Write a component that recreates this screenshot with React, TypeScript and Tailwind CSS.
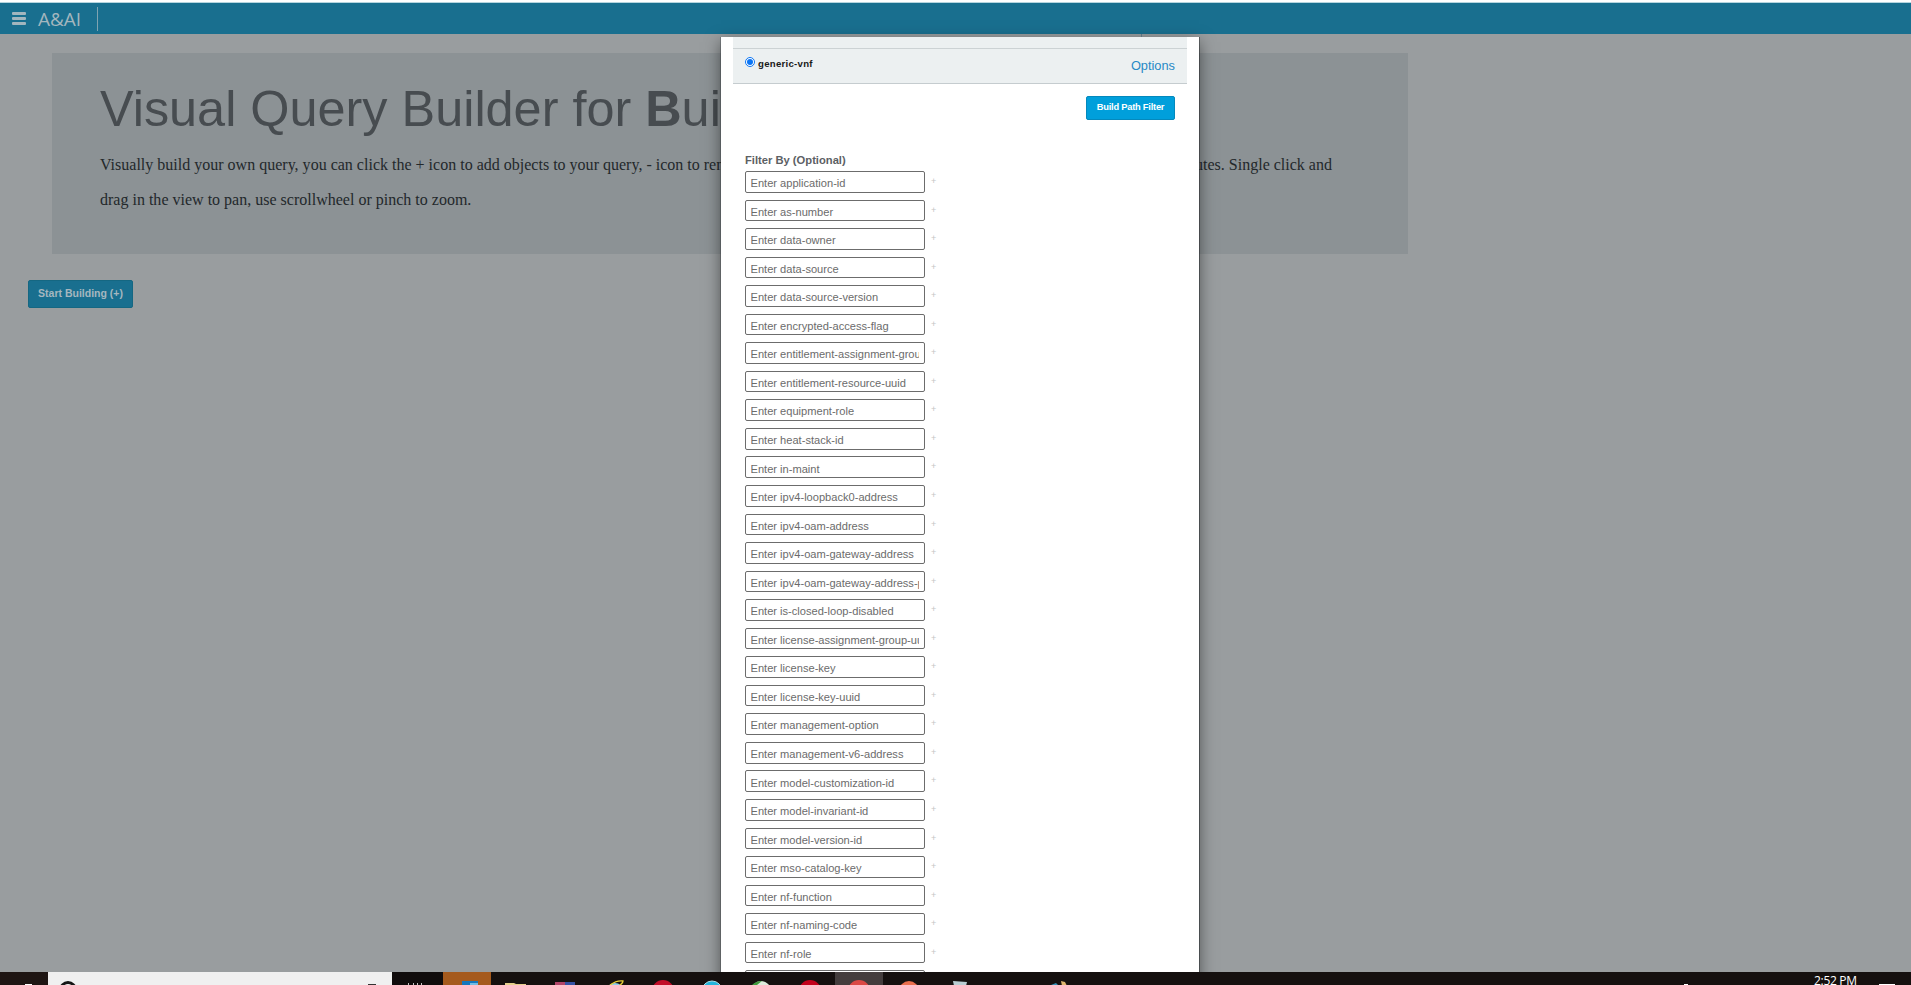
const fields = [
  "application-id", "as-number", "data-owner", "data-source", "data-source-version",
  "encrypted-access-flag", "entitlement-assignment-group-uuid", "entitlement-resource-uuid",
  "equipment-role", "heat-stack-id", "in-maint", "ipv4-loopback0-address", "ipv4-oam-address",
  "ipv4-oam-gateway-address", "ipv4-oam-gateway-address-prefix-length", "is-closed-loop-disabled",
  "license-assignment-group-uuid", "license-key", "license-key-uuid", "management-option",
  "management-v6-address", "model-customization-id", "model-invariant-id", "model-version-id",
  "mso-catalog-key", "nf-function", "nf-naming-code", "nf-role",
];

function Header() {
  return (
    <header className="flex h-[31px] shrink-0 items-center bg-[#196f8f] text-[#a3b6be]">
      <div className="ml-3 flex w-[14px] flex-col gap-[2px]">
        <span className="h-[3px] rounded-[1px] bg-[#a3b6be]" />
        <span className="h-[3px] rounded-[1px] bg-[#a3b6be]" />
        <span className="h-[3px] rounded-[1px] bg-[#a3b6be]" />
      </div>
      <span className="ml-3 w-[59px] pt-[2px] font-['Open_Sans',sans-serif] text-[19px] leading-none">A&amp;AI</span>
      <span className="mt-px h-6 w-px bg-[#7fa3b1]" />
    </header>
  );
}

function Intro() {
  return (
    <section className="ml-[52px] mt-[19px] h-[201px] w-[1356px] bg-[#8c9295] pl-12 pt-[28px]">
      <h1 className="h-[66px] whitespace-nowrap text-[50.4px] leading-[56px] text-[#474c50]">
        Visual Query Builder for <b>B</b>uild
      </h1>
      <div className="w-[1232px] font-['Liberation_Serif',serif] text-[16.03px] leading-[35px] text-[#23282b]">
        <p className="flex justify-between whitespace-nowrap">
          <span>Visually build your own query, you can click the + icon to add objects to your query, - icon to remove</span>
          <span>attributes. Single click and</span>
        </p>
        <p>drag in the view to pan, use scrollwheel or pinch to zoom.</p>
      </div>
    </section>
  );
}

function FilterModal() {
  return (
    <div className="absolute left-[721px] top-[37px] h-[1000px] w-[478px] bg-white px-3 shadow-[0_5px_15px_rgba(0,0,0,0.5),1px_0_0_rgba(60,65,68,0.6),-1px_0_0_rgba(60,65,68,0.3)]">
      <div className="relative h-3 border-b border-[#ccd2d4] bg-[#ecf0f1]">
        <span className="absolute right-[45px] top-[-3px] h-[3px] w-px bg-[#5f7480]" />
      </div>
      <div className="flex h-[35px] justify-between border-b border-[#c5cccf] bg-[#ecf0f1] px-3">
        <label className="flex items-start gap-[3px] text-[9.6px] font-bold leading-[14px] tracking-[0.28px] text-[#191919]">
          <span className="mt-2 flex size-[10px] items-center justify-center rounded-full border border-[#0b75f5] bg-white">
            <span className="size-[6px] rounded-full bg-[#0b75f5]" />
          </span>
          <span className="mt-2">generic-vnf</span>
        </label>
        <a className="mt-[9px] text-[12.8px] leading-4 text-[#2789c6]">Options</a>
      </div>
      <div className="flex justify-end px-3 pt-3">
        <button className="h-6 w-[89px] rounded-[2px] border border-[#0489bd] bg-[#009fdb] text-[9.3px] font-bold tracking-[-0.22px] text-white">Build Path Filter</button>
      </div>
      <div className="px-3 pt-[33px]">
        <h2 className="h-[18px] text-[11.2px] font-bold leading-[14px] text-[#5c6064]">Filter By (Optional)</h2>
        {fields.map((name) => (
          <div key={name} className="flex h-[28.55px] items-start">
            <input
              placeholder={"Enter " + name}
              className="h-[21.6px] w-[180px] rounded-[2px] border border-[#6c6c6c] bg-white pb-0 pl-[4.5px] pr-[5px] pt-[2.5px] text-[11.1px] placeholder:text-[#6b6b6b] placeholder:opacity-100"
            />
            <span className="ml-[6px] mt-[4px] text-[9px] leading-3 text-[#c4c4c4]">+</span>
          </div>
        ))}
        <div className="h-[21.6px] w-[180px] rounded-[2px] border border-[#6c6c6c]" />
      </div>
    </div>
  );
}

function Taskbar() {
  return (
    <footer className="relative flex h-[13px] shrink-0 overflow-hidden bg-[#15100f]">
      <div className="flex h-[13px] w-12 items-end justify-end bg-[#1e1513] pr-4">
        <span className="h-px w-[7px] bg-white" />
      </div>
      <div className="flex h-[13px] w-[344px] justify-between bg-[#f0f0f0] pl-[11px] pr-4">
        <span className="mt-[9px] size-[18px] rounded-full border-[3px] border-[#151515]" />
        <span className="mt-3 h-2 w-[8px] bg-[#333]" />
      </div>
      <svg className="h-[13px] w-[1519px]" viewBox="392 0 1519 13">
        <rect x="392" width="51" height="13" fill="#100c0c" />
        <path d="M408 12h1M413 12h1M417 12h1M421 12h1" stroke="#fff" strokeWidth="1.5" />
        <rect x="443" width="48" height="13" fill="#a55a1d" />
        <path d="M462 9h16v4h-16z" fill="#1577bd" /><path d="M470 11h8v2h-8z" fill="#70bce5" />
        <path d="M505 11h9l2 1h10v2h-21z" fill="#e5cf8b" />
        <path d="M555 10h10v4h-10z" fill="#b14468" /><path d="M565 10h10v4h-10z" fill="#3451a3" />
        <circle cx="615" cy="20" r="9" fill="#8ccfe8" /><path d="M610 13q7-5 13-4q0 2-4 5" fill="none" stroke="#e7cf37" strokeWidth="1.4" />
        <circle cx="663" cy="19" r="11" fill="#c20d28" />
        <circle cx="712" cy="19" r="10" fill="#22b5dc" stroke="#a9dfe9" strokeWidth="1" />
        <circle cx="761" cy="19" r="10" fill="#dceadb" /><path d="M752 13q4-4 10-4l-5 4z" fill="#3f9a3c" />
        <circle cx="810" cy="19" r="11" fill="#c4001b" />
        <rect x="835" width="48" height="13" fill="#443d3d" /><circle cx="859" cy="19" r="11" fill="#db4945" />
        <circle cx="909" cy="19" r="10" fill="#e96f4e" />
        <path d="M953 9l14 1-1 4h-12z" fill="#b9cdd2" />
        <path d="M1051 13l5-2 2 2z" fill="#348fb5" /><path d="M1061 9l4 1 2 4h-5z" fill="#dfb66e" />
        <path d="M1684 12h4v2h-4zM1879 12h16v2h-16z" fill="#fff" />
      </svg>
      <span className="absolute left-[1814px] top-[2px] whitespace-nowrap font-['Open_Sans',sans-serif] text-[12px] leading-[14px] tracking-[-0.3px] text-white">2:52 PM</span>
    </footer>
  );
}

export default function App() {
  return (
    <div className="flex h-[985px] w-[1911px] flex-col overflow-hidden bg-[#999d9f] font-['Liberation_Sans',Arial,sans-serif]">
      <main className="relative h-[972px] shrink-0 overflow-hidden">
        <div className="h-[3px] border-b border-[#b5d5df] bg-white" />
        <Header />
        <Intro />
        <button className="ml-7 mt-[26px] h-7 w-[105px] rounded-[2px] border border-[#156782] bg-[#196f8f] text-[10.5px] font-bold text-[#a5b7bf]">Start Building (+)</button>
        <FilterModal />
      </main>
      <Taskbar />
    </div>
  );
}
